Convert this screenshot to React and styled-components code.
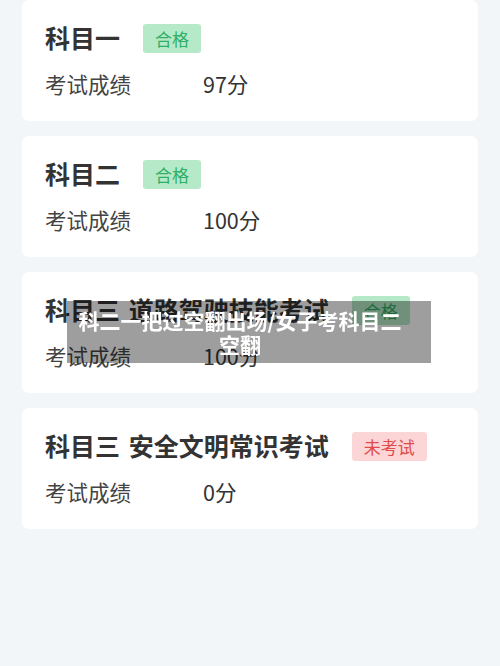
import React from "react";
import styled, { createGlobalStyle } from "styled-components";

const GlobalStyle = createGlobalStyle`
  html, body {
    margin: 0;
    padding: 0;
    background: #f3f6f9;
    font-family: "Noto Sans CJK SC", "Noto Sans", sans-serif;
  }
`;

const subjects = [
  { name: "科目一", status: "pass", score: "97分" },
  { name: "科目二", status: "pass", score: "100分" },
  { name: "科目三 道路驾驶技能考试", status: "pass", score: "100分" },
  { name: "科目三 安全文明常识考试", status: "none", score: "0分" },
];

function App() {
  return (
    <Page>
      <GlobalStyle />
      {subjects.map((s) => (
        <Card key={s.name}>
          <TitleRow>
            <Title>{s.name}</Title>
            <Badge pass={s.status === "pass"}>
              {s.status === "pass" ? "合格" : "未考试"}
            </Badge>
          </TitleRow>
          <ScoreRow>
            <Label>考试成绩</Label>
            <Value>{s.score}</Value>
          </ScoreRow>
        </Card>
      ))}
      <Toast>科二一把过空翻出场/女子考科目二空翻</Toast>
    </Page>
  );
}

const Page = styled.div`
  min-height: 666px;
  box-sizing: border-box;
  padding: 0 22px;
  display: flex;
  flex-direction: column;
  gap: 15px;
`;

const Card = styled.div`
  background: #fff;
  border-radius: 7px;
  height: 121px;
  box-sizing: border-box;
  padding: 24px 23px 0;
  display: flex;
  flex-direction: column;
  gap: 16px;
`;

const TitleRow = styled.div`
  display: flex;
  align-items: center;
  height: 29px;
`;

const Title = styled.div`
  font-size: 25px;
  line-height: 29px;
  font-weight: 700;
  color: #333;
  margin-right: 23px;
  margin-top: -3px;
  white-space: nowrap;
  word-spacing: 3px;
`;

const Badge = styled.span.withConfig({ shouldForwardProp: (p) => p !== "pass" })`
  height: 29px;
  line-height: 29px;
  padding: 0 12px;
  border-radius: 3px;
  font-size: 17px;
  background: ${(p) => (p.pass ? "#b5e9c8" : "#fcd5d6")};
  color: ${(p) => (p.pass ? "#2fae66" : "#e04a4b")};
`;

const ScoreRow = styled.div`
  display: flex;
  align-items: center;
  height: 30px;
  margin-top: -1px;
`;

const Label = styled.span`
  width: 158px;
  font-size: 21.5px;
  color: #444;
`;

const Value = styled.span`
  font-size: 21.5px;
  color: #333;
`;

const Toast = styled.div`
  position: fixed;
  left: 67px;
  top: 301px;
  width: 364px;
  height: 62px;
  box-sizing: border-box;
  padding: 7px 26px 7px 8px;
  background: rgba(0, 0, 0, 0.38);
  color: #fff;
  font-weight: 700;
  font-size: 21px;
  line-height: 24px;
  text-align: center;
`;

export default App;
